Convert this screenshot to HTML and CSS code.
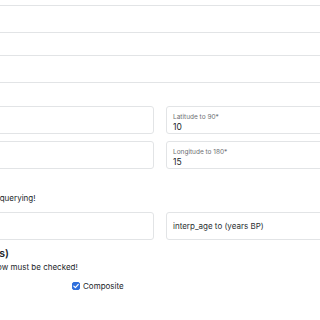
FILE: index.html
```html
<!DOCTYPE html>
<html>
<head>
<meta charset="utf-8">
<link rel="stylesheet" href="styles.css">
</head>
<body>
<div class="page">
  <div class="box first"></div>
  <div class="box gap-a"></div>
  <div class="grid2 gap-b">
    <div class="box"></div>
    <div class="box float"><span class="lbl">Latitude to 90*</span><span class="val">10</span></div>
    <div class="box"></div>
    <div class="box float"><span class="lbl">Longitude to 180*</span><span class="val">15</span></div>
  </div>
  <p class="note">Please set all of the coordinates before querying!</p>
  <div class="grid2">
    <div class="box"></div>
    <div class="box plain"><span class="ph">interp_age to (years BP)</span></div>
  </div>
  <h5 class="heading">Data Types (select all datasets)</h5>
  <p class="note2">At least one of the boxes in the row below must be checked!</p>
  <div class="checks">
    <label class="chk"><span class="cb"></span>Pollen</label>
    <label class="chk"><span class="cb"></span>Macro</label>
    <label class="chk"><span class="cb on"><svg viewBox="0 0 8 8" width="8" height="8"><path d="M1.8 4.1 L3.4 5.7 L6.3 2.4" fill="none" stroke="#fff" stroke-width="1.2" stroke-linecap="round" stroke-linejoin="round"/></svg></span>Composite</label>
  </div>
</div>
</body>
</html>
```

FILE: styles.css
```css
html, body {
  margin: 0;
  padding: 0;
  background: #fff;
  overflow: hidden;
}
body {
  font-family: Inter, "Liberation Sans", sans-serif;
  color: #212529;
  font-size: 8px;
}
.page {
  width: 620px;
  margin-left: -150px;
}
.box {
  box-sizing: border-box;
  height: 28px;
  border: 1px solid #e2e4e6;
  border-radius: 3px;
  background: #fff;
}
.first {
  margin-top: 5px;
}
.gap-a {
  margin-top: 22px;
}
.gap-b {
  margin-top: 23px;
}
.grid2 {
  display: grid;
  grid-template-columns: 304px 304px;
  column-gap: 12px;
  row-gap: 7px;
}
.float {
  display: flex;
  flex-direction: column;
  padding: 6px 6px 0;
}
.lbl {
  font-size: 6.5px;
  color: #6d7073;
  line-height: 9px;
}
.val {
  font-size: 8.5px;
  line-height: 10px;
  color: #212529;
}
.plain {
  display: flex;
  align-items: center;
  padding: 0 6px;
}
.ph {
  font-size: 8px;
  color: #2b2f33;
}
.note {
  margin: 24px 0 9px;
  font-size: 8px;
  line-height: 10px;
}
.heading {
  margin: 7px 0 0;
  font-size: 10.5px;
  font-weight: 600;
  line-height: 13px;
}
.note2 {
  margin: 2px 0 0;
  font-size: 8px;
  line-height: 10px;
}
.checks {
  display: grid;
  grid-template-columns: 60px 162px auto;
  margin-top: 9px;
}
.chk {
  display: flex;
  align-items: center;
  gap: 3px;
  font-size: 8px;
}
.cb {
  box-sizing: border-box;
  width: 8px;
  height: 8px;
  border: 1px solid #b9bec4;
  border-radius: 2px;
  display: inline-flex;
}
.cb.on {
  background: #2f6fdc;
  border-color: #2f6fdc;
}
.cb svg {
  margin: -1px;
}
```
